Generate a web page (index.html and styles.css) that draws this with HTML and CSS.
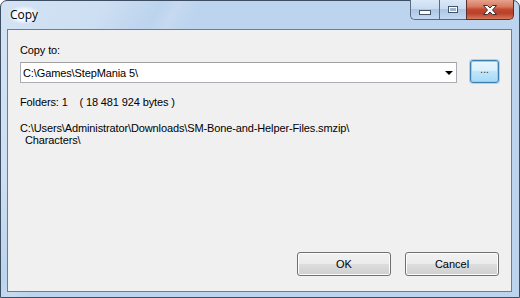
FILE: index.html
```html
<!DOCTYPE html>
<html lang="en">
<head>
    <meta charset="UTF-8">
    <title>Copy</title>
    <link rel="stylesheet" href="styles.css">
</head>
<body>
    <div class="window">
        <div class="titlebar">
            <span class="title">Copy</span>
            <div class="controls">
                <button class="ctl ctl-min"><span class="min-glyph"></span></button>
                <button class="ctl ctl-max"><span class="max-glyph"></span></button>
                <button class="ctl ctl-close">
                    <svg width="16" height="12" viewBox="0 0 16 12">
                        <path d="M1.5 1.5 L5.5 1.5 L8 4 L10.5 1.5 L14.5 1.5 L10.5 6 L14.5 10.5 L10.5 10.5 L8 8 L5.5 10.5 L1.5 10.5 L5.5 6 Z" fill="#fff" stroke="#3e3030" stroke-width="1" stroke-linejoin="round"/>
                    </svg>
                </button>
            </div>
        </div>

        <div class="client">
            <label class="field-label">Copy to:</label>
            <div class="target-row">
                <div class="combo">
                    <span class="combo-text">C:\Games\StepMania 5\</span>
                    <span class="combo-arrow"></span>
                </div>
                <button class="browse-btn">...</button>
            </div>

            <p class="info">Folders: 1    ( 18 481 924 bytes )</p>

            <div class="source">
                <p>C:\Users\Administrator\Downloads\SM-Bone-and-Helper-Files.smzip\</p>
                <p class="indent">Characters\</p>
            </div>

            <div class="actions">
                <button class="btn">OK</button>
                <button class="btn">Cancel</button>
            </div>
        </div>
    </div>
</body>
</html>
```

FILE: styles.css
```css
html, body {
    margin: 0;
    padding: 0;
    width: 520px;
    height: 298px;
    overflow: hidden;
}

body {
    font-family: "Liberation Sans", Arial, sans-serif;
    font-size: 11px;
    color: #000;
    background: #fff;
}

.window {
    box-sizing: border-box;
    width: 520px;
    height: 298px;
    border: 1px solid #3d4e62;
    border-radius: 7px 7px 0 0;
    background:
        linear-gradient(120deg, rgba(255, 255, 255, 0.35) 0, rgba(255, 255, 255, 0.25) 90px, rgba(255, 255, 255, 0) 140px, rgba(255, 255, 255, 0.15) 155px, rgba(255, 255, 255, 0) 175px),
        #bcd4ee;
    display: flex;
    flex-direction: column;
}

.titlebar {
    height: 28px;
    display: flex;
    align-items: flex-start;
}

.title {
    font-family: "Open Sans", "Noto Sans", sans-serif;
    font-size: 12px;
    margin: 5px 0 0 7px;
    padding: 0 2px;
    line-height: 18px;
    border-radius: 9px;
    background: radial-gradient(ellipse at center, rgba(255, 255, 255, 0.85) 40%, rgba(255, 255, 255, 0) 72%);
}

.controls {
    margin-left: auto;
    margin-right: 5px;
    margin-top: -1px;
    display: flex;
}

.ctl {
    height: 20px;
    padding: 0;
    border: 1px solid #5a6b80;
    border-top: none;
    display: flex;
    align-items: center;
    justify-content: center;
    background: linear-gradient(#dbe8f7 0, #c9dcf2 45%, #aec6e4 50%, #c3d8f0 100%);
}

.ctl-min {
    width: 29px;
    border-radius: 0 0 0 5px;
    border-right: none;
}

.ctl-max {
    width: 27px;
    border-right: none;
}

.ctl-close {
    width: 48px;
    border-radius: 0 0 5px 0;
    border-color: #5e2f28;
    background: linear-gradient(#e7a28c 0, #d67a5f 35%, #c2482e 50%, #b8412a 70%, #d6785b 100%);
}

.min-glyph {
    width: 10px;
    height: 3px;
    margin-top: 5px;
    background: #fff;
    border: 1px solid #435469;
}

.max-glyph {
    width: 8px;
    height: 5px;
    border: 1px solid #435469;
    background: #fff;
    box-shadow: inset 0 0 0 1px #fff, inset 0 0 0 3px #9fb3cc;
}

.client {
    flex: 1;
    margin: 0 7px 5px 6px;
    border: 1px solid #6a7d94;
    background: #f0f0f0;
    padding: 14px 12px 15px 12px;
    display: flex;
    flex-direction: column;
    letter-spacing: -0.12px;
}

.field-label {
    display: block;
    line-height: 13px;
}

.target-row {
    display: flex;
    align-items: center;
    margin-top: 5px;
}

.combo {
    box-sizing: border-box;
    width: 438px;
    height: 21px;
    border: 1px solid #abadb3;
    border-top-color: #a0a0a0;
    background: #fff;
    display: flex;
    align-items: center;
    padding-left: 2px;
}

.combo-text {
    flex: 1;
}

.combo-arrow {
    width: 0;
    height: 0;
    margin-right: 3px;
    border-left: 4px solid transparent;
    border-right: 4px solid transparent;
    border-top: 4px solid #000;
}

.browse-btn {
    box-sizing: border-box;
    width: 29px;
    height: 23px;
    margin-left: 13px;
    margin-top: -2px;
    border: 1px solid #3c7fb1;
    border-radius: 3px;
    font: inherit;
    font-size: 10px;
    line-height: 14px;
    padding: 0 0 4px 0;
    color: #2a2a2a;
    background: linear-gradient(#eaf6fd 0, #d9f0fc 45%, #bee6fd 50%, #a7d9f5 100%);
    box-shadow: inset 0 0 0 1px #94cdee, 0 0 0 1px #a6d6f5;
}

.info {
    margin: 13px 0 0 0;
    line-height: 13px;
    white-space: pre;
}

.source {
    margin-top: 13px;
}

.source p {
    margin: 0;
    line-height: 12px;
}

.source .indent {
    padding-left: 5px;
}

.actions {
    margin-top: auto;
    display: flex;
    justify-content: flex-end;
    gap: 14px;
}

.btn {
    box-sizing: border-box;
    width: 94px;
    height: 24px;
    border: 1px solid #707070;
    border-radius: 3px;
    font: inherit;
    color: #000;
    padding: 0;
    background: linear-gradient(#f2f2f2 0, #ebebeb 48%, #dddddd 52%, #cfcfcf 100%);
    box-shadow: inset 0 0 0 1px #fcfcfc;
}
```
